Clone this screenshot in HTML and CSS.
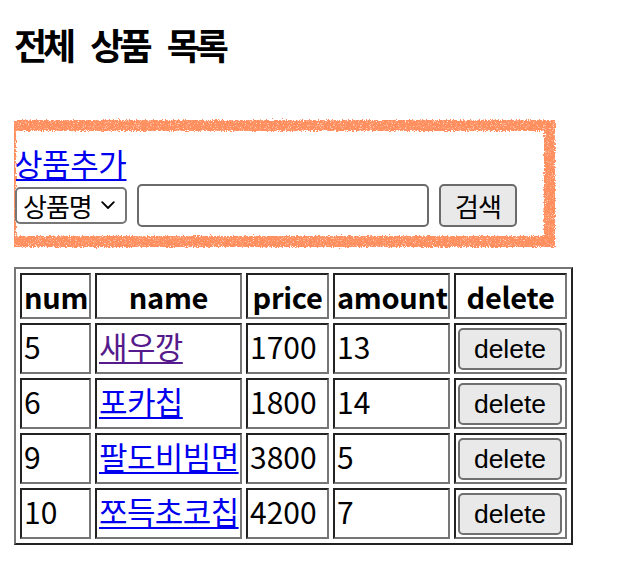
FILE: index.html
```html
<!DOCTYPE html>
<html lang="ko">
<head>
<meta charset="utf-8">
<title>전체 상품 목록</title>
<link rel="stylesheet" href="styles.css">
</head>
<body>
<svg class="defs" width="0" height="0" aria-hidden="true">
  <filter id="crayon" x="-5%" y="-10%" width="110%" height="120%">
    <feTurbulence type="fractalNoise" baseFrequency="0.7" numOctaves="2" seed="3" result="noise"/>
    <feDisplacementMap in="SourceGraphic" in2="noise" scale="5" xChannelSelector="R" yChannelSelector="G" result="disp"/>
    <feTurbulence type="fractalNoise" baseFrequency="1.4" numOctaves="1" seed="8" result="grain"/>
    <feColorMatrix in="grain" type="matrix" values="0 0 0 0 0  0 0 0 0 0  0 0 0 0 0  0 0 0 -3.2 2.8" result="mask"/>
    <feComposite in="disp" in2="mask" operator="in"/>
  </filter>
</svg>

<h3 class="title">전체 상품 목록</h3>

<div class="panel">
  <div class="add-row"><a class="add-link" href="#">상품추가</a></div>
  <form class="search">
    <div class="select-wrap">
      <select class="field-select"><option>상품명</option></select>
      <svg class="chev" width="14" height="9" viewBox="0 0 14 9"><path d="M1.2 1.2 L7 7 L12.8 1.2" fill="none" stroke="#000" stroke-width="1.8" stroke-linecap="round" stroke-linejoin="round"/></svg>
    </div>
    <input class="field-input" type="text">
    <button class="btn-search" type="button">검색</button>
  </form>
</div>

<table class="products">
  <tr>
    <th class="c-num">num</th>
    <th class="c-name">name</th>
    <th class="c-price">price</th>
    <th class="c-amount">amount</th>
    <th class="c-del">delete</th>
  </tr>
  <tr>
    <td>5</td>
    <td><a class="name-link visited" href="#">새우깡</a></td>
    <td>1700</td>
    <td>13</td>
    <td><button class="btn-del" type="button">delete</button></td>
  </tr>
  <tr>
    <td>6</td>
    <td><a class="name-link" href="#">포카칩</a></td>
    <td>1800</td>
    <td>14</td>
    <td><button class="btn-del" type="button">delete</button></td>
  </tr>
  <tr>
    <td>9</td>
    <td><a class="name-link" href="#">팔도비빔면</a></td>
    <td>3800</td>
    <td>5</td>
    <td><button class="btn-del" type="button">delete</button></td>
  </tr>
  <tr>
    <td>10</td>
    <td><a class="name-link" href="#">쪼득초코칩</a></td>
    <td>4200</td>
    <td>7</td>
    <td><button class="btn-del" type="button">delete</button></td>
  </tr>
</table>
</body>
</html>
```
FILE: styles.css
```css
html, body {
  background: #fff;
}
body {
  margin: 14px;
  font-family: "Noto Sans CJK KR", "Noto Sans", sans-serif;
  font-size: 32px;
  color: #000;
}
.defs {
  position: absolute;
  width: 0;
  height: 0;
  overflow: hidden;
}
.title {
  margin: 8px 0 0;
  height: 44px;
  line-height: 44px;
  font-size: 36px;
  font-weight: 700;
  letter-spacing: -4px;
  word-spacing: 12px;
}
.panel {
  position: relative;
  margin-top: 65px;
  padding: 9px 0;
}
.panel::before {
  content: "";
  position: absolute;
  left: -9px;
  top: -11px;
  bottom: -11px;
  width: 528px;
  border: 11px solid #ff8f5e;
  filter: url(#crayon);
  pointer-events: none;
}
.add-row {
  height: 44px;
  line-height: 44px;
}
.add-link {
  font-size: 31px;
  letter-spacing: -0.4px;
  color: #0000ee;
  text-decoration: underline;
  text-underline-offset: 3px;
  text-decoration-thickness: 2px;
}
.search {
  display: flex;
  align-items: center;
  gap: 10px;
  height: 43px;
  margin: 0;
}
.select-wrap {
  position: relative;
  margin-left: 1px;
  width: 112px;
  height: 37px;
}
.field-select {
  appearance: none;
  -webkit-appearance: none;
  display: block;
  box-sizing: border-box;
  width: 112px;
  height: 37px;
  margin: 0;
  padding: 0 0 0 6px;
  border: 2px solid #767676;
  border-radius: 5px;
  background: #fff;
  color: #000;
  font-family: "Noto Sans CJK KR", sans-serif;
  font-size: 26px;
  letter-spacing: -1px;
  line-height: 33px;
}
.chev {
  position: absolute;
  left: 86px;
  top: 14px;
  pointer-events: none;
}
.field-input {
  box-sizing: border-box;
  width: 292px;
  height: 43px;
  margin: 0;
  padding: 0 6px;
  border: 2px solid #6b6b6b;
  border-radius: 5px;
  background: #fff;
  font-size: 25px;
}
.btn-search {
  box-sizing: border-box;
  width: 78px;
  height: 43px;
  margin: 0;
  padding: 0;
  border: 2px solid #6b6b6b;
  border-radius: 5px;
  background: #e9e9e9;
  color: #000;
  font-family: "Noto Sans CJK KR", sans-serif;
  font-size: 26px;
  letter-spacing: -1px;
  line-height: 39px;
}
.products {
  table-layout: fixed;
  width: 559px;
  margin-top: 31px;
  border-collapse: separate;
  border-spacing: 4px;
  border: 2px solid;
  border-color: #767676 #222 #222 #767676;
}
.products th,
.products td {
  padding: 2px;
  border: 2px solid;
  border-color: #222 #767676 #767676 #222;
  line-height: 38px;
  white-space: nowrap;
  overflow: hidden;
}
.products th {
  font-weight: 700;
  font-size: 29px;
  letter-spacing: -0.3px;
  text-align: center;
  vertical-align: middle;
}
.products td {
  text-align: left;
  font-size: 30px;
  vertical-align: top;
}
.c-num { width: 63px; }
.c-name { width: 139px; }
.c-price { width: 75px; }
.c-amount { width: 109px; }
.c-del { width: 105px; }
.name-link {
  font-size: 31px;
  letter-spacing: -0.6px;
  color: #0000ee;
  text-decoration: underline;
  text-underline-offset: 3px;
  text-decoration-thickness: 2px;
}
.name-link.visited {
  color: #551a8b;
}
.btn-del {
  display: block;
  box-sizing: border-box;
  width: 104px;
  height: 42px;
  margin: 1px 0 0;
  padding: 0;
  border: 2px solid #707070;
  border-radius: 5px;
  background: #e9e9e9;
  color: #000;
  font-family: "Liberation Sans", Arial, sans-serif;
  font-size: 26.5px;
  line-height: 38px;
}
```
